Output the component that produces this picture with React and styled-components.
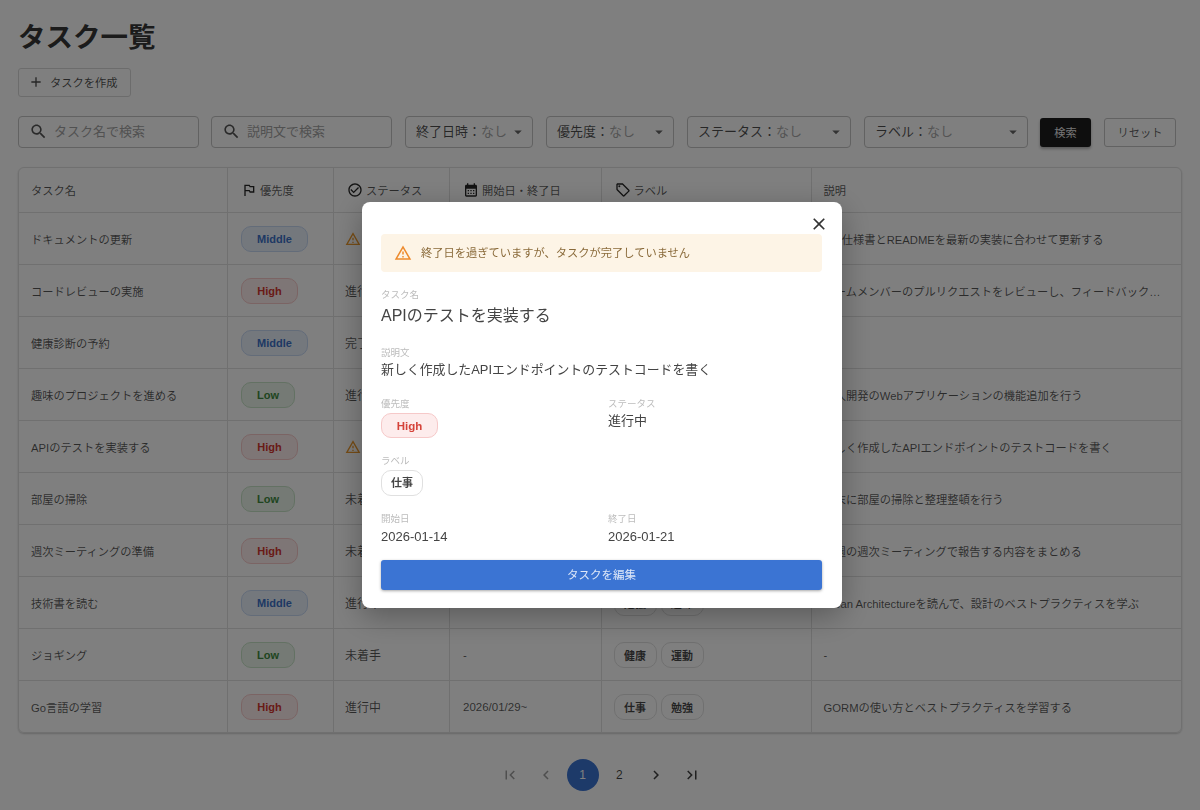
import React from 'react';
import styled, { createGlobalStyle } from 'styled-components';

const Global = createGlobalStyle`
  html, body { margin: 0; padding: 0; background: #fff; }
  body {
    font-family: "Liberation Sans", "Noto Sans CJK JP", sans-serif;
    color: rgba(0,0,0,.87);
    overflow: hidden;
  }
  * { box-sizing: border-box; }
`;

const P = {
  flag: 'm14 6-1-2H5v17h2v-7h5l1 2h7V6h-6zm4 8h-4l-1-2H7V6h5l1 2h5v6z',
  check: 'M16.59 7.58 10 14.17l-3.59-3.58L5 12l5 5 8-8zM12 2C6.48 2 2 6.48 2 12s4.48 10 10 10 10-4.48 10-10S17.52 2 12 2zm0 18c-4.42 0-8-3.58-8-8s3.58-8 8-8 8 3.58 8 8-3.58 8-8 8z',
  cal: 'M19 4h-1V2h-2v2H8V2H6v2H5c-1.11 0-1.99.9-1.99 2L3 20c0 1.1.89 2 2 2h14c1.1 0 2-.9 2-2V6c0-1.1-.9-2-2-2zm0 16H5V10h14v10zM9 14H7v-2h2v2zm4 0h-2v-2h2v2zm4 0h-2v-2h2v2zm-8 4H7v-2h2v2zm4 0h-2v-2h2v2zm4 0h-2v-2h2v2z',
  tag: 'm21.41 11.58-9-9C12.05 2.22 11.55 2 11 2H4c-1.1 0-2 .9-2 2v7c0 .55.22 1.05.59 1.42l9 9c.36.36.86.58 1.41.58s1.05-.22 1.41-.59l7-7c.37-.36.59-.86.59-1.41s-.23-1.06-.59-1.42zM13 20.01 4 11V4h7v-.01l9 9-7 7.02zM6.5 5A1.5 1.5 0 1 0 6.5 8 1.5 1.5 0 1 0 6.5 5z',
  warn: 'M12 5.99 19.53 19H4.47L12 5.99M12 2 1 21h22L12 2zm1 14h-2v2h2v-2zm0-6h-2v4h2v-4z',
  search: 'M15.5 14h-.79l-.28-.27C15.41 12.59 16 11.11 16 9.5 16 5.91 13.09 3 9.5 3S3 5.91 3 9.5 5.91 16 9.5 16c1.61 0 3.09-.59 4.23-1.57l.27.28v.79l5 4.99L20.49 19l-4.99-5zm-6 0C7.01 14 5 11.99 5 9.5S7.01 5 9.5 5 14 7.01 14 9.5 11.99 14 9.5 14z',
  add: 'M19 13h-6v6h-2v-6H5v-2h6V5h2v6h6v2z',
  close: 'M19 6.41 17.59 5 12 10.59 6.41 5 5 6.41 10.59 12 5 17.59 6.41 19 12 13.41 17.59 19 19 17.59 13.41 12z',
  first: 'M18.41 16.59 13.82 12l4.59-4.59L17 6l-6 6 6 6zM6 6h2v12H6z',
  last: 'M5.59 7.41 10.18 12l-4.59 4.59L7 18l6-6-6-6zM16 6h2v12h-2z',
  prev: 'M15.41 7.41 14 6l-6 6 6 6 1.41-1.41L10.83 12z',
  next: 'M10 6 8.59 7.41 13.17 12l-4.58 4.59L10 18l6-6z',
  drop: 'm7 10 5 5 5-5z',
};

const Svg = styled.svg`
  width: ${p => p.$size || 16}px;
  height: ${p => p.$size || 16}px;
  fill: ${p => p.$color || 'currentColor'};
  flex: none;
  display: block;
`;
const Icon = ({ d, size, color }) => (
  <Svg viewBox="0 0 24 24" $size={size} $color={color}><path d={d} /></Svg>
);

const Page = styled.div`
  width: 1200px;
  height: 810px;
  padding: 20px 18px 0;
  background: #fff;
`;
const Title = styled.h1`
  margin: 0;
  font-size: 27.5px;
  line-height: 36px;
  font-weight: 700;
  color: rgba(0,0,0,.8);
`;
const CreateButton = styled.button`
  display: flex;
  align-items: center;
  gap: 6px;
  margin-top: 12px;
  width: 113px;
  height: 29px;
  padding: 0 0 1px 9px;
  background: #fff;
  border: 1px solid #d9d9d9;
  border-radius: 3px;
  font: inherit;
  font-size: 11.25px;
  color: rgba(0,0,0,.7);
`;
const Filters = styled.div`
  display: flex;
  align-items: center;
  margin-top: 19px;
  height: 32px;
`;
const SearchBox = styled.div`
  display: flex;
  align-items: center;
  gap: 6px;
  width: 181px;
  height: 32px;
  margin-right: ${p => p.$gap}px;
  padding: 0 10px 3px;
  border: 1px solid #c4c4c4;
  border-radius: 4px;
  font-size: 13px;
  color: #a3a3a3;
  white-space: nowrap;
  & > svg { color: #555; margin-bottom: -2px; }
`;
const SelectBox = styled.div`
  display: flex;
  align-items: center;
  width: ${p => p.$w}px;
  height: 32px;
  margin-right: ${p => p.$gap}px;
  padding: 0 5px 3px 10px;
  border: 1px solid #c4c4c4;
  border-radius: 4px;
  font-size: 13px;
  color: rgba(0,0,0,.7);
  white-space: nowrap;
  & > svg { margin-left: auto; margin-bottom: -3px; color: #666; }
`;
const Muted = styled.span`
  color: #a8a8a8;
`;
const BlackButton = styled.button`
  width: 51px;
  height: 29px;
  margin-right: 13px;
  padding: 0 0 1px;
  border: 0;
  border-radius: 3px;
  background: #1c1c1c;
  color: #e8e8e8;
  font: inherit;
  font-size: 11.25px;
  box-shadow: 0 2px 3px rgba(0,0,0,.3);
`;
const ResetButton = styled.button`
  width: 72px;
  height: 29px;
  padding: 0 0 1px;
  background: #fff;
  border: 1px solid #c4c4c4;
  border-radius: 3px;
  color: rgba(0,0,0,.62);
  font: inherit;
  font-size: 11.25px;
`;
const TableWrap = styled.div`
  margin-top: 19px;
  border: 1px solid #e0e0e0;
  border-radius: 6px;
  overflow: hidden;
  box-shadow: 0 1px 2px rgba(0,0,0,.2);
`;
const Table = styled.table`
  width: 100%;
  table-layout: fixed;
  border-collapse: separate;
  border-spacing: 0;
`;
const Col = styled.col`
  width: ${p => p.$w}px;
`;
const Th = styled.th`
  height: 45px;
  padding: 0 12px 1px;
  font-size: 11.25px;
  font-weight: 400;
  text-align: left;
  color: rgba(0,0,0,.66);
  border-right: 1px solid #e0e0e0;
  border-bottom: 1px solid #e0e0e0;
  &:last-child { border-right: 0; }
`;
const ThInner = styled.div`
  display: flex;
  align-items: center;
  gap: 3px;
  margin-left: ${p => (p.$flush ? 0 : 1)}px;
  & > svg { color: rgba(0,0,0,.85); }
`;
const Td = styled.td`
  height: 52px;
  padding: 0 12px;
  font-size: 11.25px;
  color: rgba(0,0,0,.66);
  border-right: 1px solid #e0e0e0;
  border-bottom: 1px solid #e0e0e0;
  white-space: nowrap;
  overflow: hidden;
  text-overflow: ellipsis;
  &:last-child { border-right: 0; }
  tr:last-child > & { border-bottom: 0; height: 51px; }
`;
const Status = styled.div`
  display: flex;
  align-items: center;
  gap: 4px;
  margin-left: -1px;
  font-size: 12px;
`;
const DateText = styled.span`
  margin-left: 1px;
  font-size: 11.5px;
`;
const colors = {
  High: { bg: '#fdecec', border: '#f6c9c9', fg: '#d3362f' },
  Middle: { bg: '#e9f0fb', border: '#c6d8f3', fg: '#3c72c8' },
  Low: { bg: '#eaf5ea', border: '#c6e2c6', fg: '#3f8a3f' },
};
const Priority = styled.span`
  display: inline-flex;
  align-items: center;
  justify-content: center;
  height: 26px;
  width: ${p => ({ High: 57, Middle: 67, Low: 54 }[p.$l])}px;
  margin-left: 1px;
  border-radius: 10px;
  border: 1px solid ${p => colors[p.$l].border};
  background: ${p => colors[p.$l].bg};
  color: ${p => colors[p.$l].fg};
  font-size: 11px;
  font-weight: 700;
`;
const Labels = styled.div`
  display: flex;
  gap: 4px;
`;
const Chip = styled.span`
  display: inline-flex;
  align-items: center;
  justify-content: center;
  height: 26px;
  width: 43px;
  border-radius: 10px;
  border: 1px solid #e0e0e0;
  background: #fff;
  color: rgba(0,0,0,.72);
  font-size: 11px;
  font-weight: 700;
`;
const Pager = styled.nav`
  display: flex;
  justify-content: center;
  align-items: center;
  gap: 4.6px;
  margin-top: 26px;
  padding-left: 2px;
`;
const PageItem = styled.span`
  display: flex;
  align-items: center;
  justify-content: center;
  width: 32px;
  height: 32px;
  border-radius: 50%;
  font-size: 12px;
  background: ${p => (p.$on ? '#3b74d3' : 'transparent')};
  color: ${p => (p.$on ? '#fff' : p.$off ? 'rgba(0,0,0,.38)' : 'rgba(0,0,0,.75)')};
`;
const Overlay = styled.div`
  position: fixed;
  inset: 0;
  display: flex;
  align-items: center;
  justify-content: center;
  padding-left: 4px;
  background: rgba(0,0,0,.5);
`;
const Modal = styled.div`
  position: relative;
  width: 480px;
  height: 406px;
  padding: 32px 19px 19px 19px;
  background: #fff;
  border-radius: 8px;
  box-shadow: 0 8px 30px rgba(0,0,0,.3);
`;
const CloseButton = styled.button`
  position: absolute;
  top: 12px;
  right: 13px;
  width: 20px;
  height: 20px;
  padding: 0;
  border: 0;
  background: none;
  color: #333;
`;
const Alert = styled.div`
  display: flex;
  align-items: center;
  gap: 9px;
  width: 441px;
  height: 38px;
  padding: 0 13px 2px;
  background: #fdf4e6;
  border-radius: 4px;
  font-size: 11.25px;
  color: #8a6a3a;
  & > svg { margin-bottom: -1px; }
`;
const Field = styled.div`
  margin-top: ${p => p.$mt}px;
`;
const FieldLabel = styled.div`
  font-size: 9.5px;
  line-height: 12px;
  color: #bcbcbc;
`;
const TaskName = styled.div`
  margin-top: 4px;
  font-size: 16px;
  line-height: 22px;
  color: #444;
`;
const Desc = styled.div`
  margin-top: 2px;
  font-size: 12.9px;
  line-height: 18px;
  color: #444;
`;
const TwoCols = styled.div`
  display: grid;
  grid-template-columns: 227px 1fr;
  margin-top: ${p => p.$mt}px;
`;
const Value = styled.div`
  margin-top: ${p => p.$mt}px;
  font-size: 13px;
  line-height: 18px;
  color: #444;
`;
const ChipSlot = styled.div`
  margin-top: 3px;
  display: flex;
`;
const ModalChip = styled(Chip)`
  width: 42px;
  padding-bottom: 2px;
  color: #444;
`;
const ModalPriority = styled(Priority)`
  height: 25px;
  margin-left: 0;
  color: #d5433a;
  font-size: 11.5px;
`;
const EditButton = styled.button`
  display: block;
  width: 441px;
  height: 30px;
  margin-top: 14px;
  padding: 0 0 2px;
  border: 0;
  border-radius: 3px;
  background: #3b74d3;
  color: #dfe8f8;
  font: inherit;
  font-size: 11.5px;
  box-shadow: 0 1px 3px rgba(0,0,0,.35);
`;

const rows = [
  ['ドキュメントの更新', 'Middle', '進行中', true, '2026/01/10~2026/01/20', ['仕事'], 'API仕様書とREADMEを最新の実装に合わせて更新する'],
  ['コードレビューの実施', 'High', '進行中', false, '2026/01/29~', ['仕事'], 'チームメンバーのプルリクエストをレビューし、フィードバックを提供して品質を高める'],
  ['健康診断の予約', 'Middle', '完了', false, '-', ['健康'], '-'],
  ['趣味のプロジェクトを進める', 'Low', '進行中', false, '-', ['趣味'], '個人開発のWebアプリケーションの機能追加を行う'],
  ['APIのテストを実装する', 'High', '進行中', true, '2026/01/14~2026/01/21', ['仕事'], '新しく作成したAPIエンドポイントのテストコードを書く'],
  ['部屋の掃除', 'Low', '未着手', false, '-', ['家事'], '週末に部屋の掃除と整理整頓を行う'],
  ['週次ミーティングの準備', 'High', '未着手', false, '-', ['仕事'], '今週の週次ミーティングで報告する内容をまとめる'],
  ['技術書を読む', 'Middle', '進行中', false, '-', ['勉強', '趣味'], 'Clean Architectureを読んで、設計のベストプラクティスを学ぶ'],
  ['ジョギング', 'Low', '未着手', false, '-', ['健康', '運動'], '-'],
  ['Go言語の学習', 'High', '進行中', false, '2026/01/29~', ['仕事', '勉強'], 'GORMの使い方とベストプラクティスを学習する'],
];

export default function App() {
  return (
    <>
      <Global />
      <Page>
        <Title>タスク一覧</Title>
        <CreateButton><Icon d={P.add} size={16} />タスクを作成</CreateButton>
        <Filters>
          <SearchBox $gap={12}><Icon d={P.search} size={19} />タスク名で検索</SearchBox>
          <SearchBox $gap={13}><Icon d={P.search} size={19} />説明文で検索</SearchBox>
          <SelectBox $w={128} $gap={13}>終了日時：<Muted>なし</Muted><Icon d={P.drop} size={18} /></SelectBox>
          <SelectBox $w={128} $gap={13}>優先度：<Muted>なし</Muted><Icon d={P.drop} size={18} /></SelectBox>
          <SelectBox $w={164} $gap={13}>ステータス：<Muted>なし</Muted><Icon d={P.drop} size={18} /></SelectBox>
          <SelectBox $w={164} $gap={12}>ラベル：<Muted>なし</Muted><Icon d={P.drop} size={18} /></SelectBox>
          <BlackButton>検索</BlackButton>
          <ResetButton>リセット</ResetButton>
        </Filters>
        <TableWrap>
          <Table>
            <colgroup>
              <Col $w={209} /><Col $w={106} /><Col $w={116} /><Col $w={151.6} /><Col $w={210} /><Col />
            </colgroup>
            <thead>
              <tr>
                <Th><ThInner $flush>タスク名</ThInner></Th>
                <Th><ThInner><Icon d={P.flag} size={16} />優先度</ThInner></Th>
                <Th><ThInner><Icon d={P.check} size={16} />ステータス</ThInner></Th>
                <Th><ThInner><Icon d={P.cal} size={16} />開始日・終了日</ThInner></Th>
                <Th><ThInner><Icon d={P.tag} size={16} />ラベル</ThInner></Th>
                <Th><ThInner $flush>説明</ThInner></Th>
              </tr>
            </thead>
            <tbody>
              {rows.map(r => (
                <tr key={r[0]}>
                  <Td>{r[0]}</Td>
                  <Td><Priority $l={r[1]}>{r[1]}</Priority></Td>
                  <Td><Status>{r[3] && <Icon d={P.warn} size={16} color="#ed9a2d" />}{r[2]}</Status></Td>
                  <Td><DateText>{r[4]}</DateText></Td>
                  <Td><Labels>{r[5].map(l => <Chip key={l}>{l}</Chip>)}</Labels></Td>
                  <Td>{r[6]}</Td>
                </tr>
              ))}
            </tbody>
          </Table>
        </TableWrap>
        <Pager>
          <PageItem $off><Icon d={P.first} size={18} /></PageItem>
          <PageItem $off><Icon d={P.prev} size={18} /></PageItem>
          <PageItem $on>1</PageItem>
          <PageItem>2</PageItem>
          <PageItem><Icon d={P.next} size={18} /></PageItem>
          <PageItem><Icon d={P.last} size={18} /></PageItem>
        </Pager>
      </Page>
      <Overlay>
        <Modal>
          <CloseButton><Icon d={P.close} size={20} /></CloseButton>
          <Alert><Icon d={P.warn} size={18} color="#ed8a2d" />終了日を過ぎていますが、タスクが完了していません</Alert>
          <Field $mt={17}>
            <FieldLabel>タスク名</FieldLabel>
            <TaskName>APIのテストを実装する</TaskName>
          </Field>
          <Field $mt={20}>
            <FieldLabel>説明文</FieldLabel>
            <Desc>新しく作成したAPIエンドポイントのテストコードを書く</Desc>
          </Field>
          <TwoCols $mt={19}>
            <div>
              <FieldLabel>優先度</FieldLabel>
              <ChipSlot><ModalPriority $l="High">High</ModalPriority></ChipSlot>
            </div>
            <div>
              <FieldLabel>ステータス</FieldLabel>
              <Value $mt={2}>進行中</Value>
            </div>
          </TwoCols>
          <Field $mt={17}>
            <FieldLabel>ラベル</FieldLabel>
            <ChipSlot><ModalChip>仕事</ModalChip></ChipSlot>
          </Field>
          <TwoCols $mt={17}>
            <div>
              <FieldLabel>開始日</FieldLabel>
              <Value $mt={3}>2026-01-14</Value>
            </div>
            <div>
              <FieldLabel>終了日</FieldLabel>
              <Value $mt={3}>2026-01-21</Value>
            </div>
          </TwoCols>
          <EditButton>タスクを編集</EditButton>
        </Modal>
      </Overlay>
    </>
  );
}
